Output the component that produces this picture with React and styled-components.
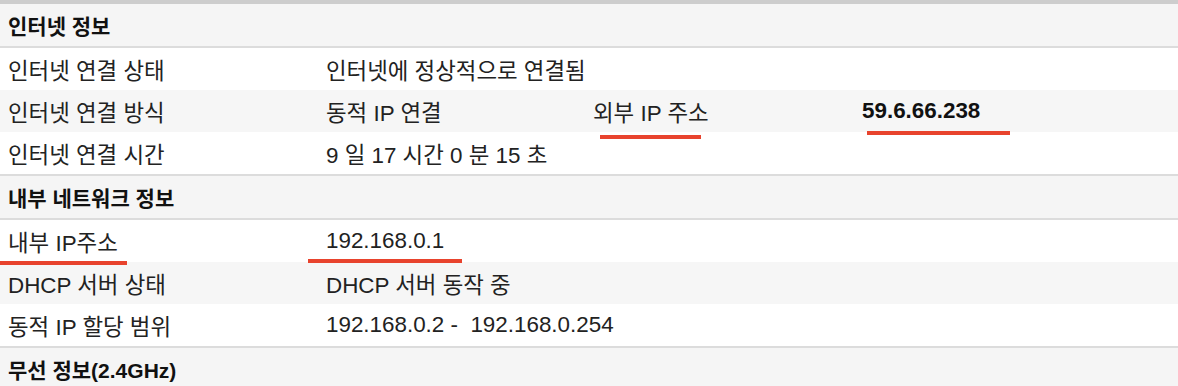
import React from 'react';
import styled, { createGlobalStyle } from 'styled-components';

const GlobalStyle = createGlobalStyle`
  body {
    margin: 0;
    background: #ffffff;
    font-family: "Liberation Sans", "Noto Sans CJK KR", sans-serif;
    color: #222;
  }
`

const sections = [
  {
    title: '인터넷 정보',
    rows: [
      { label: '인터넷 연결 상태', value: '인터넷에 정상적으로 연결됨' },
      {
        label: '인터넷 연결 방식',
        value: '동적 IP 연결',
        extraLabel: { text: '외부 IP 주소', mark: { left: 7, right: 8, bottom: -13 } },
        extraValue: { text: '59.6.66.238', bold: true, mark: { left: 5, right: -30, bottom: -12 } },
      },
      { label: '인터넷 연결 시간', value: '9 일 17 시간 0 분 15 초' },
    ],
  },
  {
    title: '내부 네트워크 정보',
    rows: [
      {
        label: '내부 IP주소',
        labelMark: { left: -8, right: -9, bottom: -9 },
        value: '192.168.0.1',
        valueMark: { left: -18, right: -18, bottom: -10 },
      },
      { label: 'DHCP 서버 상태', value: 'DHCP 서버 동작 중' },
      { label: '동적 IP 할당 범위', value: '192.168.0.2 -  192.168.0.254' },
    ],
  },
  { title: '무선 정보(2.4GHz)', rows: [] },
]

const Text = ({ children, mark, bold }) => (
  <Mark $mark={mark} $bold={bold}>{children}</Mark>
)

export default function App() {
  return (
    <>
      <GlobalStyle />
      <Table>
        {sections.map((s) => (
          <Section key={s.title}>
            <Header>{s.title}</Header>
            {s.rows.map((r) => (
              <Row key={r.label}>
                <Cell><Text mark={r.labelMark}>{r.label}</Text></Cell>
                <Cell><Text mark={r.valueMark}>{r.value}</Text></Cell>
                <Cell>
                  {r.extraLabel && <Text mark={r.extraLabel.mark}>{r.extraLabel.text}</Text>}
                </Cell>
                <Cell>
                  {r.extraValue && (
                    <Text mark={r.extraValue.mark} bold={r.extraValue.bold}>{r.extraValue.text}</Text>
                  )}
                </Cell>
              </Row>
            ))}
          </Section>
        ))}
      </Table>
    </>
  )
}

const Table = styled.div`
  width: 1178px;
  border-top: 4px solid #cdcdcd;
`

const Section = styled.section`
  & + & > header {
    border-top: 2px solid #dcdcdc;
  }
`

const Header = styled.header`
  height: 42px;
  display: flex;
  align-items: center;
  padding-left: 8px;
  background: #f5f5f5;
  border-bottom: 2px solid #dcdcdc;
  font-size: 21px;
  font-weight: bold;
  color: #111;
`

const Row = styled.div`
  height: 42px;
  display: grid;
  grid-template-columns: 318px 267px 269px 1fr;
  align-items: center;
  padding-left: 8px;
  background: #ffffff;
  font-size: 22.4px;

  &:nth-of-type(even) {
    background: #f6f6f6;
  }
`

const Cell = styled.div`
  white-space: pre;
`

const Mark = styled.span`
  position: relative;
  font-weight: ${(p) => (p.$bold ? 'bold' : 'normal')};
  color: ${(p) => (p.$bold ? '#111' : '#222')};

  ${(p) => p.$mark && `
    &::after {
      content: '';
      position: absolute;
      left: ${p.$mark.left}px;
      right: ${p.$mark.right}px;
      bottom: ${p.$mark.bottom}px;
      height: 4px;
      background: #e8432d;
    }
  `}
`
